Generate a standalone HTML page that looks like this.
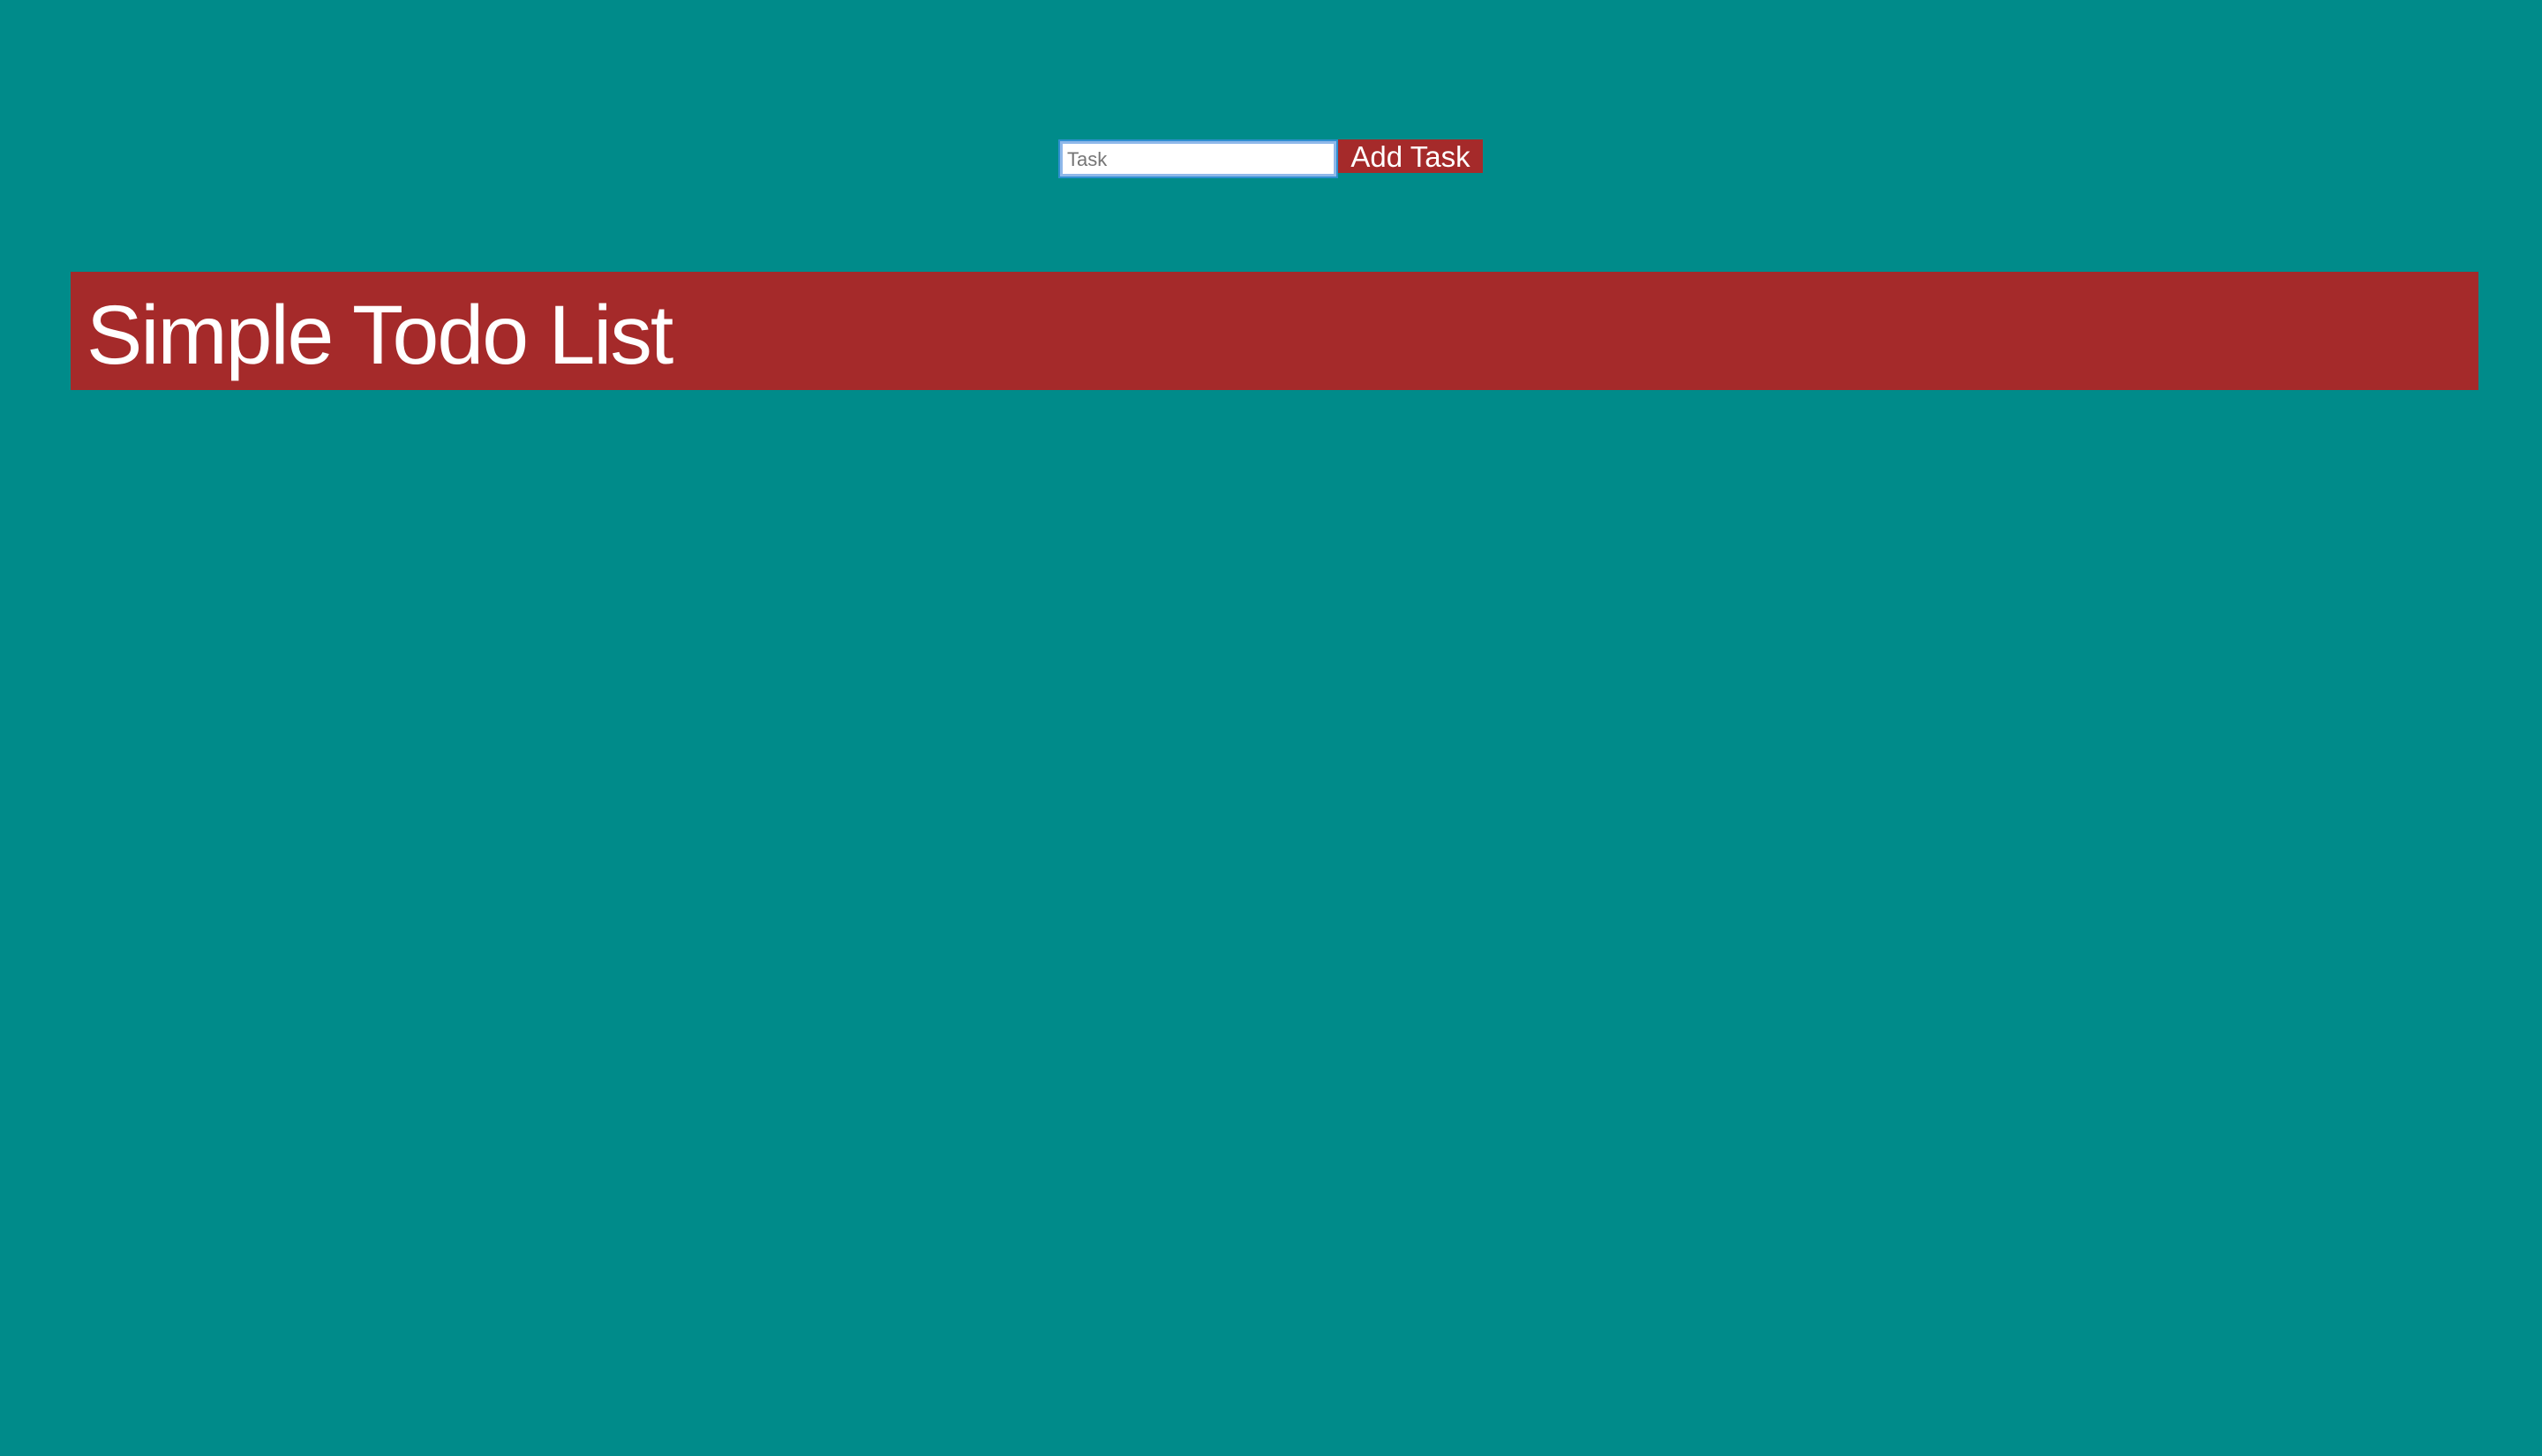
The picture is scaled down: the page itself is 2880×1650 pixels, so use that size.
<!DOCTYPE html>
<html><head><meta charset="utf-8"><style>
html,body{margin:0;padding:0;width:2880px;height:1650px;background:#008b8a;overflow:hidden;font-family:"Liberation Sans",Arial,sans-serif;}
.inp{position:absolute;left:1201px;top:160px;width:307px;height:34px;background:#fff;border:3px solid #8fb8ea;box-shadow:0 0 0 2px #2f8fd0;box-sizing:content-box;}
.inp span{position:absolute;left:5px;top:5px;font-size:22px;color:#757575;}
.btn{position:absolute;left:1516px;top:158px;width:164px;height:38px;background:#a52a2a;color:#fff;font-size:33px;line-height:39px;text-align:center;}
.hdr{position:absolute;left:80px;top:308px;width:2728px;height:134px;background:#a52a2a;}
.hdr span{position:absolute;left:18px;top:17px;font-size:95px;line-height:110px;color:#fff;letter-spacing:-2px;}
</style></head><body>
<div class="inp"><span>Task</span></div>
<div class="btn">Add Task</div>
<div class="hdr"><span>Simple Todo List</span></div>
</body></html>
